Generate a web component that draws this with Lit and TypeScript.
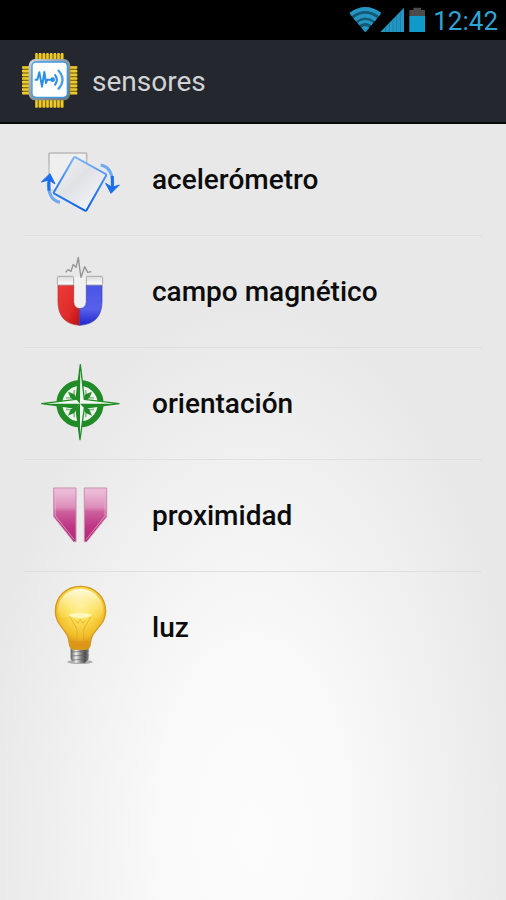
import { LitElement, html, svg, css } from "lit";
import { customElement } from "lit/decorators.js";

const accelerometer = svg`
  <svg viewBox="30 -12 240 264" aria-hidden="true">
    <defs>
      <linearGradient id="sheet" x1="0" y1="0" x2="1" y2="1">
        <stop offset="0" stop-color="#f4f4f4" /><stop offset=".45" stop-color="#e0e2e5" /><stop offset="1" stop-color="#f8fafd" />
      </linearGradient>
      <linearGradient id="edge" x1="0" y1="0" x2="0" y2="1">
        <stop offset="0" stop-color="#7db4f8" /><stop offset=".5" stop-color="#3a86f0" /><stop offset="1" stop-color="#0f62ea" />
      </linearGradient>
      <linearGradient id="back" x1="0" y1="0" x2="0" y2="1">
        <stop offset="0" stop-color="#b9b9b9" /><stop offset="1" stop-color="#d6d6d6" />
      </linearGradient>
    </defs>
    <rect x="57" y="39" width="113" height="112" rx="3" fill="#efefef" stroke="url(#back)" stroke-width="5" />
    <path d="M137 52 L227 102 Q230 104 228 107 L170 210 Q168 213 165 212 L73 161 Q70 159 72 156 L131 54 Q134 50 137 52Z" fill="url(#sheet)" stroke="url(#edge)" stroke-width="6" stroke-linejoin="round" />
    <path d="M212 75 Q249 82 248 136" fill="none" stroke="#6ea9f5" stroke-width="9" />
    <path d="M247 108 V150" fill="none" stroke="#1c6eea" stroke-width="9" />
    <path d="M227 130 L246 142 L268 135 L243 160Z" fill="#1c6eea" stroke="#1c6eea" stroke-width="3" stroke-linejoin="round" />
    <path d="M90 187 Q54 180 55 126" fill="none" stroke="#6ea9f5" stroke-width="9" />
    <path d="M57 152 V114" fill="none" stroke="#1c6eea" stroke-width="9" />
    <path d="M34 126 L60 101 L75 132 L57 120Z" fill="#1c6eea" stroke="#1c6eea" stroke-width="3" stroke-linejoin="round" />
  </svg>`;

const magnet = svg`
  <svg viewBox="30 -6 240 264" aria-hidden="true">
    <defs>
      <linearGradient id="red" x1="0" y1="0" x2="1" y2="1">
        <stop offset="0" stop-color="#ec3b38" /><stop offset=".6" stop-color="#de2c2a" /><stop offset="1" stop-color="#b80d0d" />
      </linearGradient>
      <linearGradient id="blue" x1="0" y1="0" x2="0" y2="1">
        <stop offset="0" stop-color="#4b55e6" /><stop offset=".6" stop-color="#5560ea" /><stop offset="1" stop-color="#2024d0" />
      </linearGradient>
      <linearGradient id="tip" x1="0" y1="0" x2="0" y2="1">
        <stop offset="0" stop-color="#dadada" /><stop offset="1" stop-color="#ffffff" />
      </linearGradient>
    </defs>
    <path d="M132 80 H168 V165 Q164 177 150 177 Q135 176 132 160Z" fill="#f1f1f1" />
    <path d="M84 105 H131 V155 Q132 174 149 176 V226 Q86 222 84 157Z" fill="url(#red)" stroke="#b62a2a" stroke-width="2" />
    <path d="M169 105 H216 V157 Q214 222 149 226 V176 Q168 174 169 155Z" fill="url(#blue)" stroke="#3a3fae" stroke-width="2" />
    <rect x="82" y="79" width="49" height="26" rx="4" fill="url(#tip)" stroke="#a9a9a9" stroke-width="3" />
    <rect x="169" y="79" width="49" height="26" rx="4" fill="url(#tip)" stroke="#a9a9a9" stroke-width="3" />
    <path d="M107 67 L114 59 L123 64 L130 43 L138 52 L145 22 L149 55 L153 82 L164 50 L173 67 L184 65" fill="none" stroke="#939393" stroke-width="4" stroke-linejoin="round" />
  </svg>`;

const compass = svg`
  <svg viewBox="30 0 240 264" aria-hidden="true">
    <circle cx="150" cy="131" r="62" fill="#f0f5f0" stroke="#218c27" stroke-width="18" />
    <g fill="#218c27">
      <path d="M114 95 L133 103 L150 131 L122 114Z" />
      <path d="M186 95 L178 114 L150 131 L167 103Z" />
      <path d="M114 167 L122 148 L150 131 L133 159Z" />
      <path d="M186 167 L167 159 L150 131 L178 148Z" />
    </g>
    <g fill="none" stroke="#218c27" stroke-width="5">
      <path d="M108 114 L131 112 M133 90 L131 112" opacity=".5" />
      <path d="M192 114 L169 112 M167 90 L169 112" opacity=".5" />
      <path d="M108 148 L131 150 M133 172 L131 150" opacity=".5" />
      <path d="M192 148 L169 150 M167 172 L169 150" opacity=".5" />
    </g>
    <path d="M151 14 L163 118 L267 131 L163 144 L150 239 L138 144 L35 131 L138 118Z" fill="#f4f8f4" stroke="#218c27" stroke-width="4" stroke-linejoin="round" />
    <g fill="#218c27">
      <path d="M151 14 L138 118 L150 131Z" />
      <path d="M267 131 L163 145 L150 131Z" />
      <path d="M150 239 L137 145 L150 131Z" />
      <path d="M35 131 L138 145 L150 131Z" />
    </g>
  </svg>`;

const proximity = svg`
  <svg viewBox="30 -9 240 264" aria-hidden="true">
    <defs>
      <linearGradient id="pink" x1="0" y1="0" x2="0" y2="1">
        <stop offset="0" stop-color="#f0c6de" /><stop offset=".36" stop-color="#dc8dba" /><stop offset=".44" stop-color="#cc609d" /><stop offset=".7" stop-color="#bf3986" /><stop offset="1" stop-color="#b02474" />
      </linearGradient>
    </defs>
    <g fill="url(#pink)" stroke="#c98bae" stroke-width="3" stroke-linejoin="round">
      <path d="M71 39 H138 V200 H131 L71 125Z" />
      <path d="M163 39 H230 V125 L170 200 H163Z" />
    </g>
    <g fill="none" stroke="#e6b3d0" stroke-width="3" opacity=".7">
      <path d="M133 44 H76 V123 L133 194" />
      <path d="M168 44 H225 V123 L168 194" />
    </g>
  </svg>`;

const bulb = svg`
  <svg viewBox="30 12 240 264" aria-hidden="true">
    <defs>
      <radialGradient id="glow" cx=".5" cy=".3" r=".62">
        <stop offset="0" stop-color="#fff3a6" /><stop offset=".45" stop-color="#fbdc51" /><stop offset=".8" stop-color="#f2bd2a" /><stop offset="1" stop-color="#dc9817" />
      </radialGradient>
      <linearGradient id="shine" x1="0" y1="0" x2="0" y2="1">
        <stop offset="0" stop-color="#fffbe2" /><stop offset="1" stop-color="#fde768" stop-opacity=".2" />
      </linearGradient>
      <linearGradient id="metal" x1="0" y1="0" x2="1" y2="0">
        <stop offset="0" stop-color="#5d5d5d" /><stop offset=".3" stop-color="#f2f2f2" /><stop offset=".55" stop-color="#8b8b8b" /><stop offset=".8" stop-color="#4a4a4a" /><stop offset="1" stop-color="#8a8a8a" />
      </linearGradient>
    </defs>
    <ellipse cx="150" cy="246" rx="38" ry="6" fill="#777" opacity=".55" />
    <path d="M122 203 H176 V238 L165 248 H134 L122 238Z" fill="url(#metal)" />
    <path d="M122 216 L176 213 M122 228 L176 225 M125 240 L174 237" stroke="#666" stroke-width="2" />
    <path d="M151 19 C108 19 76 52 76 94 C76 140 117 148 118 192 Q119 207 134 208 H166 Q180 207 181 192 C182 148 227 140 227 94 C227 52 194 19 151 19Z" fill="url(#glow)" stroke="#d39a24" stroke-width="4" />
    <path d="M151 27 C111 27 84 57 84 91 C84 108 94 118 102 114 Q150 92 200 114 C209 118 219 108 219 91 C219 57 191 27 151 27Z" fill="url(#shine)" />
    <ellipse cx="151" cy="106" rx="34" ry="8" fill="#fff8bd" />
    <path d="M120 110 L141 148 V195 M182 110 L161 148 V195 M134 119 L144 130 L151 118 L158 130 L168 119" fill="none" stroke="#d99e22" stroke-width="3" opacity=".6" />
    <path d="M124 180 Q150 188 176 180 L174 202 H127Z" fill="#dc941a" opacity=".55" />
  </svg>`;

const pinsTop = [76, 87, 98, 109, 120, 131, 142, 153];
const pinsSide = [79, 90, 101, 112, 123, 134, 145, 156];

const chip = svg`
  <svg class="logo" viewBox="30 33 180 180" aria-hidden="true">
    <defs>
      <linearGradient id="frame" x1="0" y1="0" x2="1" y2="1">
        <stop offset="0" stop-color="#d5d8dc" /><stop offset=".5" stop-color="#8f979f" /><stop offset="1" stop-color="#6b737b" />
      </linearGradient>
    </defs>
    <g fill="#8a7412">
      <rect x="75" y="42" width="86" height="160" />
      <rect x="38" y="78" width="162" height="86" />
    </g>
    <g fill="#ecca2c">
      ${pinsTop.map((x) => svg`<rect x=${x} y="39" width="7" height="164" />`)}
      ${pinsSide.map((y) => svg`<rect x="36" y=${y} width="166" height="7" />`)}
    </g>
    <rect x="56" y="57" width="125" height="124" rx="20" fill="url(#frame)" />
    <rect x="66" y="66" width="106" height="106" rx="12" fill="#fff" stroke="#3d9be4" stroke-width="4" />
    <path d="M74 119 H82 L88 97 L96 140 L103 96 L108 129 L112 119 H124" fill="none" stroke="#2a8fe6" stroke-width="6" stroke-linejoin="round" />
    <circle cx="128" cy="119" r="7" fill="#2a8fe6" />
    <path d="M134 103 Q147 119 134 136" fill="none" stroke="#2a8fe6" stroke-width="6" />
    <path d="M144 90 Q171 119 144 148" fill="none" stroke="#4b9fe6" stroke-width="7" />
  </svg>`;

const wifi = svg`
  <svg class="wifi" viewBox="36 18 96 84" role="img" aria-label="Wi-Fi">
    <path d="M38 42 Q85 4 132 42 L85 97Z" fill="#155874" />
    <g fill="none" stroke="#2496c4">
      <path d="M41 43 Q85 11 129 43" stroke-width="12" />
      <path d="M53 59 Q85 35 117 59" stroke-width="11" />
      <path d="M64 72 Q85 57 106 72" stroke-width="9" />
    </g>
    <path d="M73 83 Q85 73 97 83 L85 97Z" fill="#2496c4" />
  </svg>`;

const signal = svg`
  <svg class="signal" viewBox="132 18 72 84" role="img" aria-label="Cobertura">
    <path d="M130 96 L201 23 V96Z" fill="#2496c4" />
    <path d="M146 82 V96 M157 70 V96 M168 59 V96 M179 48 V96 M190 37 V96" stroke="#1c7ea8" stroke-width="3" />
  </svg>`;

const battery = svg`
  <svg class="battery" viewBox="216 18 48 84" role="img" aria-label="Batería">
    <path d="M217 30 H229 V23 H252 V30 H264 V50 H217Z" fill="#4c4a4c" />
    <rect x="217" y="48" width="47" height="48" fill="#109acb" />
  </svg>`;

const sensors = [
  { name: "acelerómetro", icon: accelerometer },
  { name: "campo magnético", icon: magnet },
  { name: "orientación", icon: compass },
  { name: "proximidad", icon: proximity },
  { name: "luz", icon: bulb },
];

@customElement("app-root")
export class AppRoot extends LitElement {
  static styles = css`
    :host {
      display: flex;
      flex-direction: column;
      min-height: 100vh;
      font-family: Roboto, "Liberation Sans", sans-serif;
      background: #e8e8e8;
    }
    .status {
      display: flex;
      align-items: center;
      justify-content: flex-end;
      height: 40px;
      padding-right: 8px;
      background: #000;
      color: #2fa5d6;
    }
    .status svg {
      height: 28px;
      overflow: visible;
    }
    .wifi {
      width: 32px;
    }
    .signal {
      width: 24px;
      margin-right: 4px;
    }
    .battery {
      width: 16px;
      margin-right: 8px;
    }
    .clock {
      font-size: 26px;
      line-height: 40px;
      padding-top: 2px;
    }
    .bar {
      display: flex;
      align-items: center;
      gap: 12px;
      height: 82px;
      padding: 0 20px;
      background: #24272e;
      border-bottom: 2px solid #08090b;
    }
    .logo {
      width: 60px;
      height: 60px;
    }
    .title {
      margin: 0;
      padding-top: 2px;
      color: #d2d3d5;
      font-size: 28px;
      font-weight: 400;
      line-height: 36px;
    }
    .content {
      flex: 1;
      background: radial-gradient(ellipse 54% 70% at 50% 92%, #fcfcfc 0%, #f9f9f9 35%, #f0f0f0 70%, #e8e8e8 100%);
    }
    .list {
      margin: 0;
      padding: 0 24px;
      list-style: none;
    }
    .item + .item {
      border-top: 1px solid #dfdfdf;
    }
    .row {
      display: flex;
      align-items: center;
      gap: 32px;
      width: 100%;
      height: 111px;
      padding: 0 16px;
      border: 0;
      background: none;
      color: #0c0c0c;
      font: inherit;
      font-size: 28px;
      font-weight: 500;
      line-height: 36px;
      text-align: left;
      cursor: pointer;
    }
    .row svg {
      flex: none;
      width: 80px;
      height: 88px;
    }
  `;

  render() {
    return html`
      <div class="status">
        ${wifi}${signal}${battery}
        <time class="clock">12:42</time>
      </div>
      <header class="bar">
        ${chip}
        <h1 class="title">sensores</h1>
      </header>
      <main class="content">
        <ul class="list">
          ${sensors.map(
            (s) => html`
              <li class="item">
                <button class="row" type="button">${s.icon}<span>${s.name}</span></button>
              </li>
            `
          )}
        </ul>
      </main>
    `;
  }
}
